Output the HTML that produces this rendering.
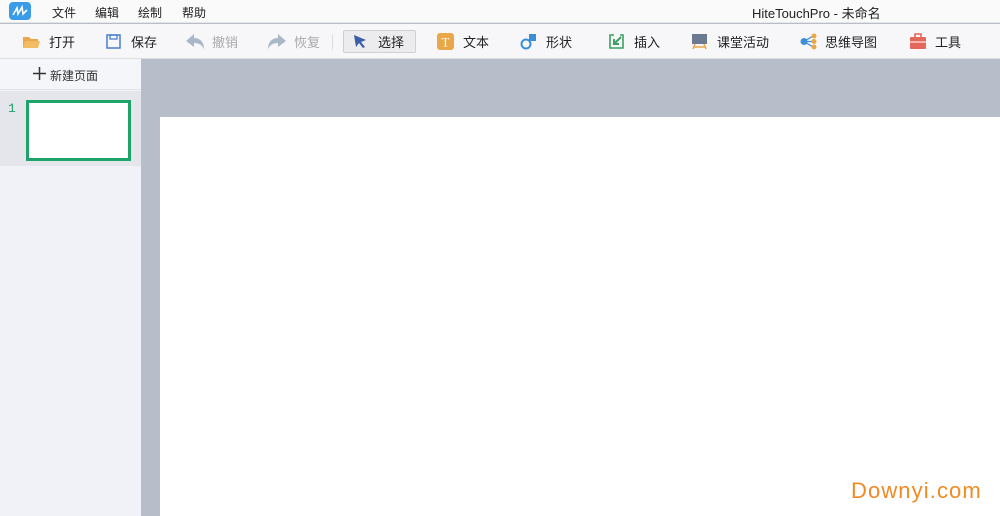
<!DOCTYPE html>
<html><head><meta charset="utf-8"><style>
*{margin:0;padding:0;box-sizing:border-box}
body{width:1000px;height:516px;overflow:hidden;background:#b8bdca;font-family:"Liberation Sans","Noto Sans CJK SC",sans-serif;font-size:13px;color:#222;position:relative}
.a{position:absolute}
#menu{left:0;top:0;width:1000px;height:23px;background:#fafafa;border-bottom:1px solid #e6e6e6}
#tb{left:0;top:24px;width:1000px;height:35px;background:#f7f7f9;border-bottom:1px solid #dedede}
.m{top:4px;font-size:12px}
.t{top:34px;font-size:13px;line-height:17px}
.g{color:#aaa}
svg{position:absolute}
</style></head><body>
<div id="menu" class="a"></div>
<svg style="left:9px;top:2px" width="22" height="18" viewBox="0 0 22 18"><rect x="0" y="0" width="22" height="18" rx="4" fill="#3a9be8"/><path d="M4 13 L8 6 L9 12 L13 5 L14 12 L18 8" stroke="#fff" stroke-width="1.6" fill="none"/></svg>
<div class="a m" style="left:52px">文件</div>
<div class="a m" style="left:95px">编辑</div>
<div class="a m" style="left:138px">绘制</div>
<div class="a m" style="left:182px">帮助</div>
<div class="a m" style="left:752px;font-size:13px;top:3px">HiteTouchPro - 未命名</div>
<div id="tb" class="a"></div>
<div class="a" style="left:343px;top:30px;width:73px;height:23px;background:#ececef;border:1px solid #d0d0d4;border-radius:2px"></div>
<div class="a" style="left:332px;top:34px;width:1px;height:16px;background:#ddd"></div>
<svg style="left:23px;top:35px" width="17" height="14"><path d="M0 2h6l2 2h7v9H0z" fill="#e8a84a"/><path d="M2 6h15l-2 7H0z" fill="#f2bd62"/></svg>
<div class="a t" style="left:49px">打开</div>
<svg style="left:106px;top:34px" width="15" height="15"><rect x="1" y="1" width="13" height="13" fill="none" stroke="#4a7fd0" stroke-width="1.5"/><rect x="4" y="1" width="7" height="4" fill="none" stroke="#4a7fd0" stroke-width="1.3"/></svg>
<div class="a t" style="left:131px">保存</div>
<svg style="left:186px;top:34px" width="18" height="15"><path d="M0 7L8 0v4c6 0 10 4 10 11c-2-4-5-6-10-6v4z" fill="#a9b7c8"/></svg>
<div class="a t g" style="left:212px">撤销</div>
<svg style="left:268px;top:34px" width="18" height="15"><path d="M18 7L10 0v4C4 4 0 8 0 15c2-4 5-6 10-6v4z" fill="#a9b7c8"/></svg>
<div class="a t g" style="left:294px">恢复</div>
<svg style="left:353px;top:34px" width="14" height="15"><path d="M1 1L13 6L8 8L12 13L10 14L6 9L3 13z" fill="#3a5fa8"/></svg>
<div class="a t" style="left:378px">选择</div>
<svg style="left:437px;top:33px" width="17" height="17"><rect width="17" height="17" rx="3" fill="#e8a84a"/><text x="8.5" y="13.5" font-size="13" text-anchor="middle" fill="#fff" font-family="Liberation Serif">T</text></svg>
<div class="a t" style="left:463px">文本</div>
<svg style="left:520px;top:33px" width="18" height="17"><circle cx="6" cy="11" r="4.5" fill="none" stroke="#3a8fd8" stroke-width="2"/><rect x="9" y="1" width="7" height="7" fill="#3a8fd8"/></svg>
<div class="a t" style="left:546px">形状</div>
<svg style="left:608px;top:33px" width="17" height="17"><path d="M6 2H2v13h13V2h-3" fill="none" stroke="#3aa060" stroke-width="1.6"/><path d="M13 4L6 11M6 6v5h5" fill="none" stroke="#3aa060" stroke-width="2"/></svg>
<div class="a t" style="left:634px">插入</div>
<svg style="left:691px;top:33px" width="17" height="17"><rect x="1" y="1" width="15" height="10" fill="#6a7a90"/><path d="M4 11L2 16M13 11L15 16M3 14h11" stroke="#e8a84a" stroke-width="1.6"/></svg>
<div class="a t" style="left:717px">课堂活动</div>
<svg style="left:800px;top:33px" width="17" height="17"><circle cx="4" cy="8.5" r="3.5" fill="#3a8fd8"/><path d="M4 8.5L13 3M4 8.5h9M4 8.5L13 14" stroke="#3a8fd8" stroke-width="1.3"/><circle cx="14" cy="3" r="2.5" fill="#e8a84a"/><circle cx="14" cy="8.5" r="2.5" fill="#e8a84a"/><circle cx="14" cy="14" r="2.5" fill="#e8a84a"/></svg>
<div class="a t" style="left:825px">思维导图</div>
<svg style="left:909px;top:33px" width="18" height="17"><rect x="1" y="4" width="16" height="12" rx="1" fill="#e4685a"/><path d="M6 4V1h6v3" fill="none" stroke="#e4685a" stroke-width="1.6"/><path d="M1 9h16" stroke="#fff" stroke-width="1"/></svg>
<div class="a t" style="left:935px">工具</div>
<div class="a" style="left:0;top:59px;width:141px;height:457px;background:#f1f2f7"></div>
<div class="a" style="left:0;top:59px;width:141px;height:31px;background:#f5f6f9;border-bottom:1px solid #e3e4ea"></div>
<svg style="left:33px;top:67px" width="13" height="13"><path d="M6.5 0v13M0 6.5h13" stroke="#333" stroke-width="1.5"/></svg>
<div class="a" style="left:50px;top:67px;font-size:12px;color:#333">新建页面</div>
<div class="a" style="left:0;top:91px;width:141px;height:75px;background:#e5e6eb"></div>
<div class="a" style="left:8px;top:101px;font-size:13px;color:#1ea36b;font-family:'Liberation Mono',monospace">1</div>
<div class="a" style="left:26px;top:100px;width:105px;height:61px;background:#fff;border:3px solid #1ea36b"></div>
<div class="a" style="left:160px;top:117px;width:840px;height:399px;background:#fff"></div>
<div class="a" style="left:851px;top:478px;font-size:22px;letter-spacing:1.1px;color:#f08a24">Downyi.com</div>
</body></html>
